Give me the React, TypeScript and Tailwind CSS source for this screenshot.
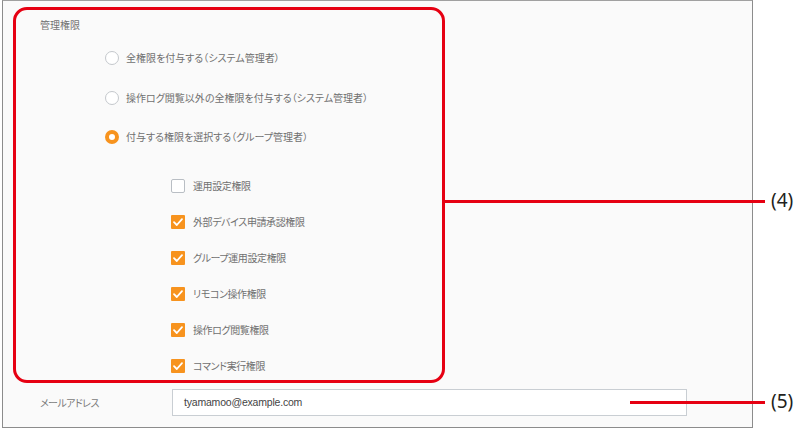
const radios = [
  { label: "全権限を付与する（システム管理者）", checked: false },
  { label: "操作ログ閲覧以外の全権限を付与する（システム管理者）", checked: false },
  { label: "付与する権限を選択する（グループ管理者）", checked: true },
];

const perms = [
  { label: "運用設定権限", checked: false },
  { label: "外部デバイス申請承認権限", checked: true },
  { label: "グループ運用設定権限", checked: true },
  { label: "リモコン操作権限", checked: true },
  { label: "操作ログ閲覧権限", checked: true },
  { label: "コマンド実行権限", checked: true },
];

function Radio({ checked }: { checked: boolean }) {
  return checked ? (
    <span className="w-[14px] h-[14px] rounded-full border-[4px] border-[#f7931e] bg-white shrink-0" />
  ) : (
    <span className="w-[14px] h-[14px] rounded-full border border-[#c4c8cc] bg-white shrink-0" />
  );
}

function Checkbox({ checked }: { checked: boolean }) {
  if (!checked) {
    return <span className="w-[14px] h-[14px] rounded-[2px] border border-[#b9bec4] bg-white shrink-0" />;
  }
  return (
    <span className="w-[14px] h-[14px] rounded-[1px] bg-[#f7931e] shrink-0 flex items-center justify-center">
      <svg width="14" height="14" viewBox="0 0 14 14">
        <path d="M3 7.2 L5.8 10 L11 4.2" fill="none" stroke="#fff" strokeWidth="1.8" strokeLinecap="round" strokeLinejoin="round" />
      </svg>
    </span>
  );
}

export default function App() {
  return (
    <div className="relative w-[805px] h-[430px] bg-white font-['Noto_Sans_CJK_JP',sans-serif] [font-feature-settings:'palt'] overflow-hidden">
      <div className="ml-[2px] w-[751px] h-[428px] border border-[#8c8c8c] border-t-[#a0a0a0] bg-[#fafafa]">
        {/* 管理権限 */}
        <div className="ml-[10px] mt-[6px] w-[432px] rounded-[14px] border-[3px] border-[#e60012] pt-[7px] pb-[4px]">
          <div className="ml-[24px] h-[16px] leading-[16px] text-[10px] text-[#727272]">管理権限</div>

          <div className="mt-[15px] ml-[89px] flex flex-col gap-[19.5px]">
            {radios.map((r) => (
              <div key={r.label} className="h-[20px] flex items-center gap-[7px]">
                <Radio checked={r.checked} />
                <span className="text-[10px] text-[#707070] leading-[20px] whitespace-nowrap">{r.label}</span>
              </div>
            ))}
          </div>

          <div className="mt-[29px] ml-[155px] flex flex-col gap-[16px]">
            {perms.map((p) => (
              <div key={p.label} className="h-[20px] flex items-center gap-[8px]">
                <Checkbox checked={p.checked} />
                <span className="text-[10px] tracking-[-0.4px] text-[#707070] leading-[20px] whitespace-nowrap">{p.label}</span>
              </div>
            ))}
          </div>
        </div>

        {/* メールアドレス */}
        <div className="mt-[6px] flex items-center">
          <div className="ml-[37px] w-[132px] text-[10px] tracking-[-0.6px] text-[#7a7a7a]">メールアドレス</div>
          <div className="w-[515px] h-[27px] border border-[#c9ced3] bg-white flex items-center pl-[11px] font-['Liberation_Sans',sans-serif] text-[10.5px] tracking-[-0.2px] text-[#444]">
            tyamamoo@example.com
          </div>
        </div>
      </div>

      {/* annotations */}
      <div className="absolute left-[445px] top-[200px] w-[320px] h-[2.5px] bg-[#e60012]" />
      <div className="absolute left-[771px] top-[186px] text-[19px] leading-[28px] text-[#231f20] font-['Noto_Sans',sans-serif] [font-feature-settings:normal]">(4)</div>
      <div className="absolute left-[630px] top-[401px] w-[135px] h-[2.5px] bg-[#e60012]" />
      <div className="absolute left-[771px] top-[387px] text-[19px] leading-[28px] text-[#231f20] font-['Noto_Sans',sans-serif] [font-feature-settings:normal]">(5)</div>
    </div>
  );
}
